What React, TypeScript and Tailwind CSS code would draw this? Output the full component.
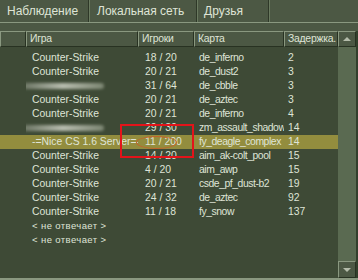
import React from 'react';

type Row = { game: string; players: string; map: string; ping: string; blur?: boolean; active?: boolean; dead?: boolean };

const rows: Row[] = [
  { game: 'Counter-Strike', players: '18 / 20', map: 'de_inferno', ping: '2' },
  { game: 'Counter-Strike', players: '20 / 21', map: 'de_dust2', ping: '3' },
  { game: '', players: '31 / 64', map: 'de_cbble', ping: '3', blur: true },
  { game: 'Counter-Strike', players: '20 / 21', map: 'de_aztec', ping: '3' },
  { game: 'Counter-Strike', players: '20 / 21', map: 'de_inferno', ping: '4' },
  { game: '', players: '29 / 30', map: 'zm_assault_shadow', ping: '14', blur: true },
  { game: '-=Nice CS 1.6 Server=-', players: '11 / 200', map: 'fy_deagle_complex', ping: '14', active: true },
  { game: 'Counter-Strike', players: '14 / 20', map: 'aim_ak-colt_pool', ping: '15' },
  { game: 'Counter-Strike', players: '4 / 20', map: 'aim_awp', ping: '15' },
  { game: 'Counter-Strike', players: '20 / 21', map: 'csde_pf_dust-b2', ping: '19' },
  { game: 'Counter-Strike', players: '24 / 32', map: 'de_aztec', ping: '92' },
  { game: 'Counter-Strike', players: '11 / 18', map: 'fy_snow', ping: '137' },
  { game: '< не отвечает >', players: '', map: '', ping: '', dead: true },
  { game: '< не отвечает >', players: '', map: '', ping: '', dead: true },
];

const cols = 'grid grid-cols-[26px_112px_56px_90px_54px]';

export default function App() {
  return (
    <div className="relative w-[358px] h-[280px] overflow-hidden bg-[#3e4a36] text-[#dfe4d6] flex flex-col" style={{ fontFamily: '"Liberation Sans", Arial, sans-serif' }}>
      {/* вкладки */}
      <div className="flex h-[23px] bg-[#4c5844] border-b border-[#8a9880] text-[12px] leading-[22px]">
        <div className="w-[89px] pl-[7px] border-r border-[#2e3828]">Наблюдение</div>
        <div className="w-[108px] pl-[7px] border-l border-[#6a7a60] border-r border-r-[#2e3828]">Локальная сеть</div>
        <div className="w-[72px] pl-[6px] border-l border-[#6a7a60] border-r border-r-[#2e3828]">Друзья</div>
        <div className="flex-1 border-l border-[#6a7a60]"></div>
      </div>
      <div className="h-[8px] bg-[#4c5844]"></div>

      <div className="flex flex-1 min-h-0">
        <div className="flex-1 flex flex-col">
          {/* шапка */}
          <div className={`${cols} h-[16px] text-[10.4px] leading-[14px] tracking-[-0.25px] bg-[#4c5844]`}>
            {['', 'Игра', 'Игроки', 'Карта', 'Задержка.'].map((t, i) => (
              <div key={i} className="pl-[3px] border-t border-l border-[#8a9880] border-b border-r border-b-[#283222] border-r-[#283222] whitespace-nowrap overflow-hidden">
                {t}
              </div>
            ))}
          </div>
          {/* список серверов */}
          <div className="pt-[4px] text-[10.4px] leading-[14px]">
            {rows.map((r, i) => (
              <div key={i} className={`${cols} h-[14px] ${r.active ? 'bg-[#938d3e]' : ''}`}>
                <div></div>
                <div className={`pl-[6px] whitespace-nowrap overflow-hidden ${r.dead ? 'text-[9.5px] tracking-[0.4px]' : ''}`}>
                  {r.blur ? (
                    <div className="mt-[4px] -ml-[10px] h-[6px] w-[82px] rounded-full bg-gradient-to-r from-[#6a7462] via-[#b9beb0] to-[#7c8672] blur-[1.5px]"></div>
                  ) : r.game}
                </div>
                <div className="pl-[7px] whitespace-nowrap">{r.players}</div>
                <div className="pl-[5px] whitespace-nowrap overflow-hidden tracking-[-0.45px]">{r.map}</div>
                <div className="pl-[4px] whitespace-nowrap">{r.ping}</div>
              </div>
            ))}
          </div>
        </div>

        {/* полоса прокрутки */}
        <div className="w-[20px] flex flex-col bg-[#5a6a51] border-r-2 border-[#33402c]">
          <div className="h-[16px] bg-[#4c5844] border-t border-l border-[#8a9880] border-b border-r border-b-[#283222] border-r-[#283222] flex items-center justify-center">
            <div className="w-0 h-0 border-l-[4px] border-r-[4px] border-b-[4px] border-l-transparent border-r-transparent border-b-[#b4bcaa]"></div>
          </div>
          <div className="flex-1"></div>
          <div className="h-[17px] bg-[#4c5844] border-t border-l border-[#8a9880] border-b border-r border-b-[#283222] border-r-[#283222] flex items-center justify-center">
            <div className="w-0 h-0 border-l-[4px] border-r-[4px] border-t-[4px] border-l-transparent border-r-transparent border-t-[#b4bcaa]"></div>
          </div>
        </div>
      </div>
      <div className="h-[2px] bg-[#8a9880]"></div>

      {/* пометки */}
      <div className="absolute left-[120px] top-[124px] w-[74px] h-[34px] border-2 border-[#e3141a]"></div>
      <div className="absolute left-[136px] top-[136px] w-[41px] h-[13px] rounded-[50%] border border-[#c4622a]"></div>
    </div>
  );
}
